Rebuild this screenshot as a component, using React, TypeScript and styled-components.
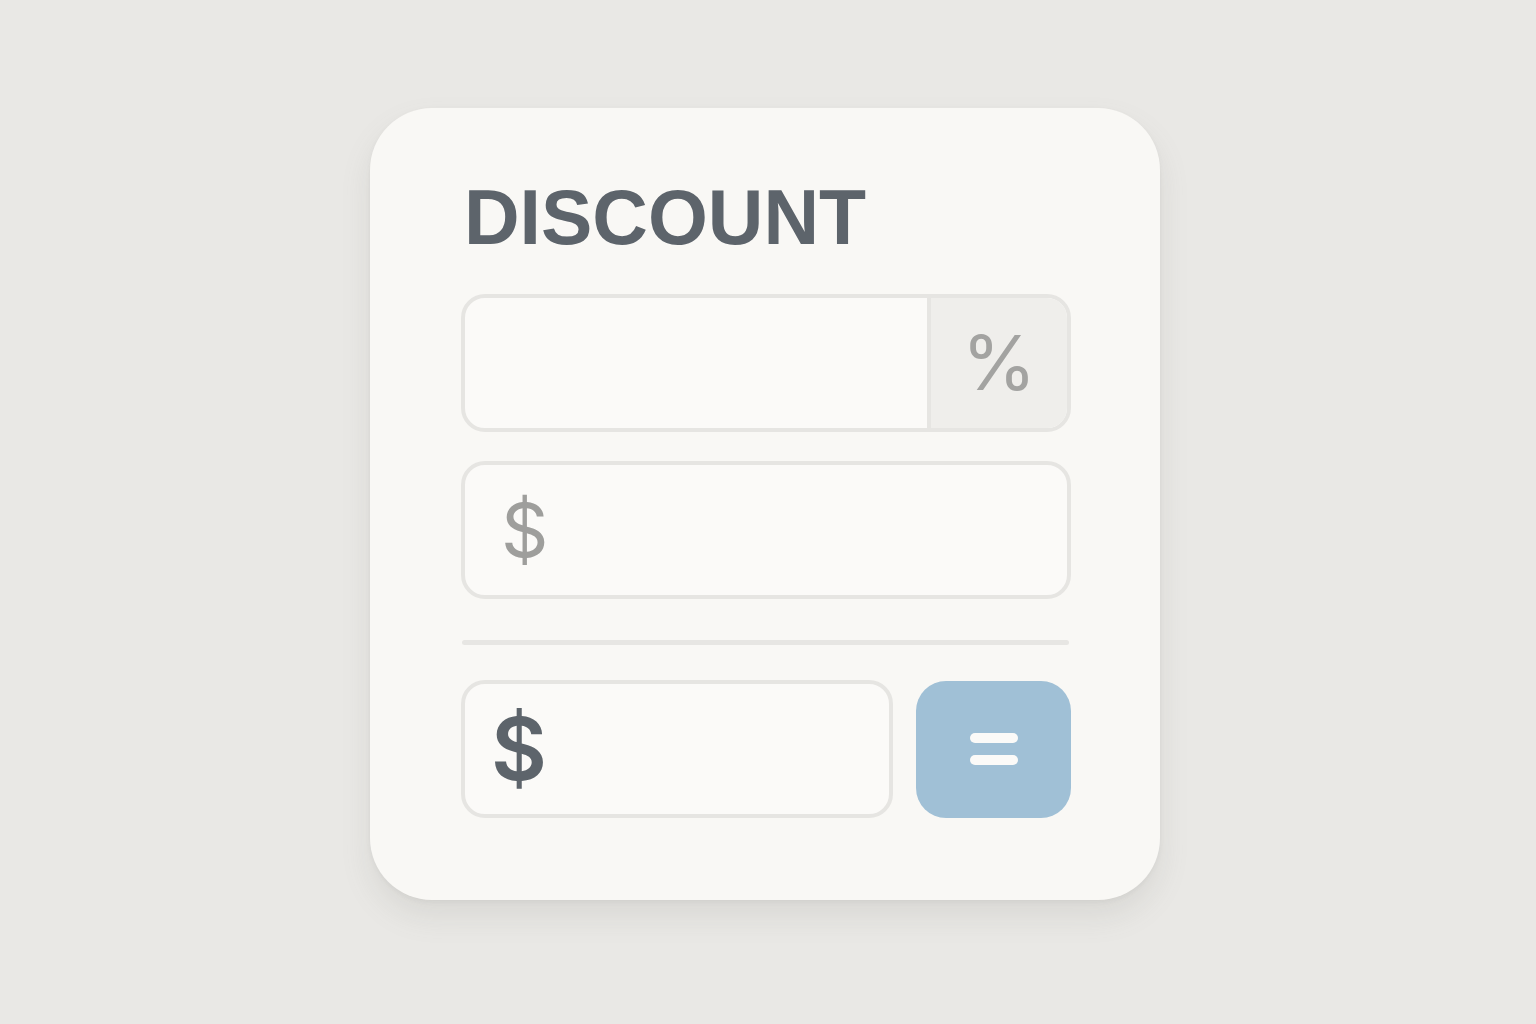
import React from 'react';
import styled, {createGlobalStyle} from "styled-components";

const GlobalStyle = createGlobalStyle`
  html, body {
    margin: 0;
    padding: 0;
    background: #e9e8e5;
    font-family: "Liberation Sans", Arial, sans-serif;
  }
`

const Page = styled.div`
  min-height: 100vh;
  display: flex;
  justify-content: center;
  align-items: flex-start;
  padding-top: 108px;
  padding-right: 6px;
  box-sizing: border-box;
`

const Card = styled.div`
  width: 790px;
  height: 792px;
  box-sizing: border-box;
  padding: 71px 89px 0 91px;
  background: #f9f8f5;
  border-radius: 62px;
  box-shadow: 0 16px 30px rgba(120, 118, 110, 0.14), 0 2px 4px rgba(120, 118, 110, 0.08);
  display: flex;
  flex-direction: column;
`

const Title = styled.h1`
  margin: 0 0 38px 0;
  font-size: 77px;
  line-height: 1;
  font-weight: 700;
  color: #5d646b;
  padding-left: 3px;
`

type FieldProps = {
    width?: string
}

const Field = styled.div<FieldProps>`
  width: ${(props) => props.width || '100%'};
  height: 138px;
  box-sizing: border-box;
  border: 4px solid #e6e5e2;
  border-radius: 24px;
  background: #fbfaf8;
  display: flex;
  align-items: center;
  overflow: hidden;
`

const FieldBody = styled.div`
  flex: 1;
  height: 100%;
`

const Suffix = styled.div`
  width: 140px;
  height: 100%;
  border-left: 4px solid #e6e5e2;
  background: #efeeeb;
  display: flex;
  align-items: center;
  justify-content: center;
  font-family: Inter, "Liberation Sans", sans-serif;
  font-size: 76px;
  color: #a3a3a1;
  padding-bottom: 2px;
  box-sizing: border-box;
`

type SignProps = {
    dark?: boolean
}

const Sign = styled.span<SignProps>`
  padding-left: ${(props) => props.dark ? '26px' : '36px'};
  font-family: Inter, "Liberation Sans", sans-serif;
  font-size: ${(props) => props.dark ? '86px' : '74px'};
  font-weight: ${(props) => props.dark ? 600 : 400};
  color: ${(props) => props.dark ? '#5d646b' : '#9e9e9c'};
  line-height: 1;
`

const Divider = styled.div`
  height: 5px;
  border-radius: 3px;
  background: #e7e6e3;
  margin: 41px 2px 35px 1px;
`

const Row = styled.div`
  display: flex;
  gap: 23px;
  align-items: center;
`

const EqualsButton = styled.button`
  width: 155px;
  height: 137px;
  border: none;
  border-radius: 30px;
  background: #a0c0d6;
  display: flex;
  flex-direction: column;
  align-items: center;
  justify-content: center;
  gap: 12px;
  padding: 0;
  cursor: pointer;
`

const Bar = styled.span`
  width: 48px;
  height: 10px;
  border-radius: 5px;
  background: #fbfaf8;
`

export default function App() {
    return (
        <>
            <GlobalStyle/>
            <Page>
                <Card>
                    <Title>DISCOUNT</Title>
                    <Field>
                        <FieldBody/>
                        <Suffix>%</Suffix>
                    </Field>
                    <Field style={{marginTop: 29}}>
                        <Sign>$</Sign>
                    </Field>
                    <Divider/>
                    <Row>
                        <Field width="432px">
                            <Sign dark>$</Sign>
                        </Field>
                        <EqualsButton>
                            <Bar/>
                            <Bar/>
                        </EqualsButton>
                    </Row>
                </Card>
            </Page>
        </>
    );
}
